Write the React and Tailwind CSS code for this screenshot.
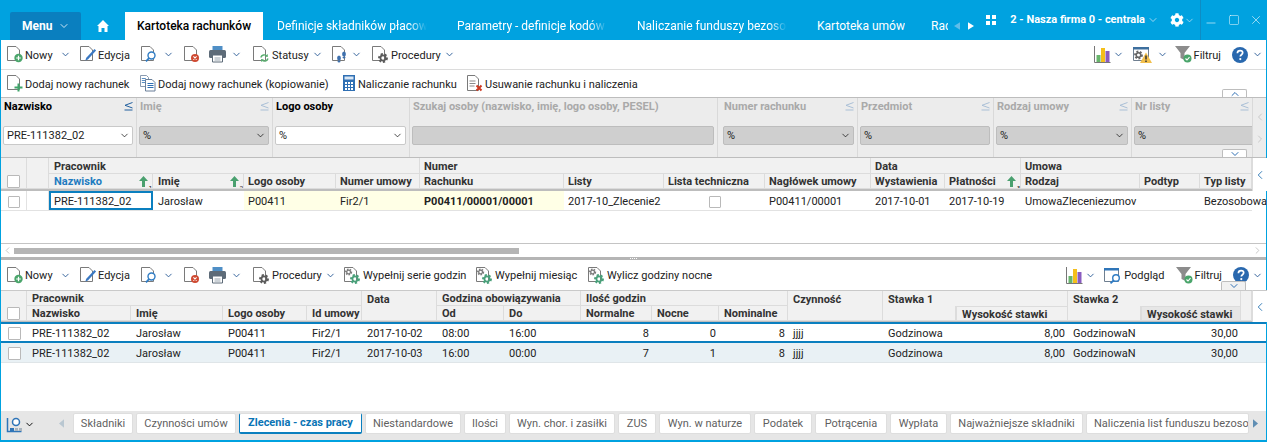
import React from 'react';
import { ChevronDown, ChevronLeft, ChevronRight, ChevronUp, Minus, Square, X } from 'lucide-react';
import { FaCog } from 'react-icons/fa';

// small down chevron used next to toolbar buttons
const Chev = ({ className = '' }) => (
  <ChevronDown className={`w-[11px] h-[11px] text-[#2a5a96] shrink-0 ${className}`} strokeWidth={2} />
);

const Ico = ({ children }) => (
  <svg viewBox="0 0 17 17" className="w-[17px] h-[17px] shrink-0 overflow-visible">{children}</svg>
);

const Page = () => (
  <path d="M.5.5h8.5l3.500 3.500v10.500H.5z" fill="#fff" stroke="#7a7a7a" strokeWidth="1" />
);

const NewIcon = () => (
  <Ico>
    <Page />
    <circle cx="11.500" cy="12" r="4.200" fill="#4aa56b" />
    <path d="M11.500 9.700v4.600M9.200 12h4.600" stroke="#fff" strokeWidth="1.200" />
  </Ico>
);
const EditIcon = () => (
  <Ico>
    <Page />
    <path d="M14.500 3l1.600 1.600-8.200 8.800-2.600 1.200 1-2.800z" fill="#3a78c2" />
  </Ico>
);
const SearchIcon = () => (
  <Ico>
    <Page />
    <circle cx="10.500" cy="9.500" r="3.500" fill="#fff" stroke="#2f7cc4" strokeWidth="1.400" />
    <path d="M8 12.200l-3 3.200" stroke="#2f7cc4" strokeWidth="1.800" />
  </Ico>
);
const DeleteIcon = () => (
  <Ico>
    <Page />
    <circle cx="11" cy="12" r="4" fill="#cf4a32" />
    <path d="M9.400 10.400l3.200 3.200M12.600 10.400l-3.200 3.200" stroke="#fff" strokeWidth="1.100" />
  </Ico>
);
const PrintIcon = () => (
  <Ico>
    <path d="M3.500 0h10v4h-10z" fill="#4f8fc6" />
    <rect x="0" y="4" width="17" height="8" rx="1.500" fill="#5d6b78" />
    <path d="M3.500 9h10v7h-10z" fill="#fff" stroke="#5d6b78" />
    <path d="M5.500 12h6M5.500 14h6" stroke="#9aa6b0" />
  </Ico>
);
const StatusIcon = () => (
  <Ico>
    <Page />
    <path d="M7.800 11.500a3.600 3.600 0 016-1.600M15 12.500a3.600 3.600 0 01-6 1.600" fill="none" stroke="#58ad6e" strokeWidth="1.400" />
    <path d="M14.800 8l0 3-3-.4zM8 16l0-3 3 .4z" fill="#58ad6e" />
  </Ico>
);
const StepsIcon = () => (
  <Ico>
    <Page />
    <ellipse cx="7" cy="12" rx="1.900" ry="2.600" fill="#3e70ad" />
    <ellipse cx="7" cy="15.400" rx="1.500" ry="1" fill="#3e70ad" />
    <ellipse cx="12" cy="8" rx="1.900" ry="2.600" fill="#3e70ad" />
    <ellipse cx="12" cy="11.400" rx="1.500" ry="1" fill="#3e70ad" />
  </Ico>
);
const Cog = ({ x, y, r, color }) => (
  <g>
    <circle cx={x} cy={y} r={r} fill="none" stroke={color} strokeWidth={r * 0.75} strokeDasharray={`${r * 0.55} ${r * 0.45}`} />
    <circle cx={x} cy={y} r={r * 0.72} fill="none" stroke={color} strokeWidth={r * 0.5} />
  </g>
);
const ProcIcon = () => (
  <Ico>
    <Page />
    <Cog x={11} y={12} r={3.600} color="#5c5c5c" />
  </Ico>
);
const FillIcon = () => (
  <Ico>
    <Page />
    <Cog x={4.600} y={5} r={2.600} color="#7c7c7c" />
    <Cog x={11} y={12} r={3.600} color="#4aa07a" />
  </Ico>
);
const AddIcon = () => (
  <Ico>
    <Page />
    <path d="M11.500 8.500v8M7.500 12.500h8" stroke="#3fa46a" strokeWidth="2" />
  </Ico>
);
const CopyIcon = () => (
  <Ico>
    <path d="M.5.5h6l2 2v9h-8z" fill="#fff" stroke="#8a9bb0" />
    <path d="M1.800 3.500h4M1.800 5.500h4M1.800 7.500h4" stroke="#5b8fc4" />
    <path d="M5.500 4.500h6.500l3 3v8.500h-9.500z" fill="#fff" stroke="#6a7f99" />
    <path d="M7.500 8.500h6M7.500 10.500h6M7.500 12.500h6" stroke="#2f6fb3" />
  </Ico>
);
const CalcIcon = () => (
  <Ico>
    <rect x="2" y="0" width="12" height="16" fill="#2f6fb3" />
    <rect x="3.500" y="1.500" width="9" height="3" fill="#d9e7f5" />
    <path d="M4 7h2v2H4zM7 7h2v2H7zM10 7h2v2h-2zM4 10h2v2H4zM7 10h2v2H7zM10 10h2v2h-2zM4 13h2v2H4zM7 13h2v2H7zM10 13h2v2h-2z" fill="#fff" />
  </Ico>
);
const RemoveIcon = () => (
  <Ico>
    <path d="M.5.5h7.500l3.500 3.500v11.500H.5z" fill="#fff" stroke="#7a7a7a" />
    <path d="M2.500 6h6M2.500 8.500h6M2.500 11h5" stroke="#8a8a8a" />
    <path d="M9.500 10.500l5 5M14.500 10.500l-5 5" stroke="#cc3a22" strokeWidth="2" />
  </Ico>
);
const ChartIcon = () => (
  <Ico>
    <path d="M.5 0v16.500h16" fill="none" stroke="#777" />
    <path d="M2.500 9h4v7h-4z" fill="#68b56c" />
    <path d="M7 2h4v14H7z" fill="#f5bf1b" />
    <path d="M11.500 5h4v11h-4z" fill="#8a5cc0" />
  </Ico>
);
const WarnIcon = () => (
  <Ico>
    <path d="M.5 1.500h15v13H.5z" fill="#fff" stroke="#6f7f90" />
    <path d="M0 1h16v2.500H0z" fill="#3d6f9e" />
    <Cog x={5.500} y={9} r={3.200} color="#666" />
    <path d="M13 6.500l6 10.500H7z" fill="#f2bf4b" />
    <path d="M13 9.500v4M13 14.500v1.500" stroke="#333" strokeWidth="1.500" />
  </Ico>
);
const FilterIcon = () => (
  <Ico>
    <path d="M0 0h15l-5.500 7v7l-4-2V7z" fill="#8c8c8c" />
    <circle cx="12.500" cy="12.500" r="4" fill="#4aa56b" />
    <path d="M10.500 12.500l1.500 1.500 2.500-2.800" fill="none" stroke="#fff" strokeWidth="1.100" />
  </Ico>
);
const HelpIcon = () => (
  <svg viewBox="0 0 16 16" className="w-4 h-4 shrink-0">
    <circle cx="8" cy="8" r="8" fill="#2968ae" />
    <path d="M5.400 6.200c0-1.700 1.200-2.600 2.700-2.600s2.600.9 2.600 2.200c0 1.900-2.400 1.900-2.400 3.700" fill="none" stroke="#fff" strokeWidth="1.700" />
    <circle cx="8.300" cy="12.100" r="1.100" fill="#fff" />
  </svg>
);
const PreviewIcon = () => (
  <Ico>
    <path d="M.5 1.500h14v13H.5z" fill="#fff" stroke="#6f7f90" />
    <path d="M0 1h15v2.500H0z" fill="#2f75b8" />
    <circle cx="12" cy="11" r="3.300" fill="#fff" stroke="#2f7cc4" strokeWidth="1.400" />
    <path d="M9.500 13.500l-3 2.800" stroke="#2f7cc4" strokeWidth="1.800" />
  </Ico>
);
const SortIcon = ({ n }) => (
  <span className="relative flex w-[13px] h-[13px] shrink-0">
    <svg viewBox="0 0 9 11" className="w-[9px] h-[11px]">
      <path d="M4.500 0L9 5H6v6H3V5H0z" fill="#4aa06f" />
    </svg>
    <span className="absolute right-0 -bottom-[2px] text-[6px] leading-[7px] text-black font-normal">{n}</span>
  </span>
);
// the little "less or equal" marker in a filter column
const CmpIcon = ({ on }) => (
  <svg viewBox="0 0 9 9" className="w-[9px] h-[9px] mt-[2px] shrink-0">
    <path d="M8.500 .5L1 3.300 8.500 6M.5 8h8" fill="none" stroke={on ? '#215f9e' : '#a9bfd6'} strokeWidth="1" />
  </svg>
);

const Check = ({ className = '' }) => (
  <span className={`block w-[12px] h-[12px] border border-[#b9b9b9] bg-white rounded-[1px] ${className}`} />
);

const Btn = ({ icon, label, chev, w = '', gap = 'ml-[1px]', chevGap = 'ml-[5px]' }) => (
  <div className={`flex items-center shrink-0 ${w}`}>
    {icon}
    {label && <span className={`${gap} relative top-[1px] whitespace-nowrap`}>{label}</span>}
    {chev && <Chev className={chevGap} />}
  </div>
);

const NavTab = ({ w, label, fade }) => (
  <div className={`shrink-0 ${w} h-full flex items-center`}>
    <span className={`block overflow-hidden whitespace-nowrap text-white ${fade ? 'w-[150px] [mask-image:linear-gradient(to_right,black_88%,transparent)]' : ''}`}>
      {label}
    </span>
  </div>
);

const TopBar = () => (
  <div className="h-[40px] shrink-0 flex items-end pl-[10px] text-[12px]">
    <div className="w-[71px] h-[28px] bg-[#0a7fbf] rounded-t-[2px] flex items-center pl-[12px] text-white font-bold">
      Menu
      <ChevronDown className="w-[12px] h-[12px] ml-[6px] text-[#cfe6f5]" strokeWidth={2} />
    </div>
    <div className="w-[44px] h-[28px] flex items-center justify-center">
      <svg viewBox="0 0 12 12" className="w-[12px] h-[12px]">
        <path d="M6 0l6 6h-1.500v6H7.500V8h-3v4H1.500V6H0z" fill="#fff" />
      </svg>
    </div>
    <div className="w-[138px] h-[28px] bg-white flex items-center justify-center font-medium text-black">
      Kartoteka rachunków
    </div>
    <div className="flex h-[28px] ml-[14px] w-[668px]">
      <NavTab w="w-[180px]" label="Definicje składników płacowych" fade />
      <NavTab w="w-[180px]" label="Parametry - definicje kodów płacowych" fade />
      <NavTab w="w-[180px]" label="Naliczanie funduszy bezosobowych" fade />
      <NavTab w="w-[114px]" label="Kartoteka umów" />
      <span className="w-[17px] h-full flex items-center overflow-hidden text-white whitespace-nowrap shrink-0">Rachunki</span>
    </div>
  </div>
);

const TopRight = () => (
  <div className="absolute top-0 right-0 h-[40px] flex items-center text-white">
    <svg viewBox="0 0 8 10" className="w-[6px] h-[10px] mr-[8px] mt-[12px]"><path d="M8 0v10L0 5z" fill="#5fbde9" /></svg>
    <svg viewBox="0 0 8 10" className="w-[6px] h-[10px] mr-[12px] mt-[12px]"><path d="M0 0v10l8-5z" fill="#fff" /></svg>
    <div className="grid grid-cols-2 gap-[2px] mr-[14px] -mt-[1px]">
      <span className="w-[4px] h-[4px] bg-white" />
      <span className="w-[4px] h-[4px] bg-white" />
      <span className="w-[4px] h-[4px] bg-white" />
      <span className="w-[4px] h-[4px] bg-white" />
    </div>
    <span className="font-bold text-[11px] whitespace-nowrap -mt-[1px]">2 - Nasza firma 0 - centrala</span>
    <ChevronDown className="w-[12px] h-[12px] ml-[2px] mr-[11px] text-[#cfe6f5]" strokeWidth={1.500} />
    <FaCog className="w-[14px] h-[14px] text-white" />
    <ChevronDown className="w-[11px] h-[11px] mr-[5px] text-[#cfe6f5]" strokeWidth={1.500} />
    <div className="w-[1px] h-[40px] bg-[#0e8cc4]" />
    <Minus className="w-[14px] h-[14px] ml-[3px] mt-[6px]" strokeWidth={1} />
    <Square className="w-[12px] h-[12px] ml-[10px] -mt-[1px]" strokeWidth={1} />
    <X className="w-[14px] h-[14px] ml-[9px] mr-[4px] -mt-[1px]" strokeWidth={1} />
  </div>
);

const TopToolbar = () => (
  <div className="h-[30px] shrink-0 flex items-center pl-[6px] border-b border-[#dcdcdc] relative">
    <Btn icon={<NewIcon />} label="Nowy" chev w="w-[73px]" chevGap="ml-[7px]" />
    <Btn icon={<EditIcon />} label="Edycja" w="w-[61px]" />
    <Btn icon={<SearchIcon />} chev w="w-[43px]" />
    <Btn icon={<DeleteIcon />} w="w-[25px]" />
    <Btn icon={<PrintIcon />} chev w="w-[44px]" />
    <Btn icon={<StatusIcon />} label="Statusy" gap="ml-[2px]" chev w="w-[79px]" chevGap="ml-[3px]" />
    <Btn icon={<StepsIcon />} chev w="w-[40px]" chevGap="ml-[2px]" />
    <Btn icon={<ProcIcon />} label="Procedury" gap="ml-[2px]" chev w="w-[86px]" chevGap="ml-[3px]" />
    <div className="ml-auto flex items-center pr-[3px]">
      <ChartIcon />
      <Chev className="ml-[2px] mr-[9px]" />
      <WarnIcon />
      <Chev className="ml-[7px] mr-[7px]" />
      <FilterIcon />
      <span className="ml-[2px] mr-[11px] relative top-[1px]">Filtruj</span>
      <HelpIcon />
      <Chev className="ml-[4px]" />
    </div>
  </div>
);

const ActionBar = () => (
  <div className="h-[27px] shrink-0 flex items-center pl-[6px] relative">
    <Btn icon={<AddIcon />} label="Dodaj nowy rachunek" w="w-[133px]" />
    <Btn icon={<CopyIcon />} label="Dodaj nowy rachunek (kopiowanie)" w="w-[201px]" />
    <Btn icon={<CalcIcon />} label="Naliczanie rachunku" gap="ml-0" w="w-[126px]" />
    <Btn icon={<RemoveIcon />} label="Usuwanie rachunku i naliczenia" w="w-[180px]" />
    <div className="absolute right-[19px] bottom-0 w-[25px] h-[8px] border border-b-0 border-[#bdbdbd] rounded-t-[2px] bg-white flex items-center justify-center">
      <ChevronUp className="w-[12px] h-[12px] text-[#2f6fb3]" strokeWidth={2} />
    </div>
  </div>
);

const filters = [
  { w: 'w-[136px]', label: 'Nazwisko', value: 'PRE-111382_02', on: true, sel: true, cmp: true },
  { w: 'w-[136px]', label: 'Imię', value: '%', sel: true, cmp: true },
  { w: 'w-[137px]', label: 'Logo osoby', value: '%', on: true, sel: true },
  { w: 'w-[308px]', label: 'Szukaj osoby (nazwisko, imię, logo osoby, PESEL)', value: '' },
  { w: 'w-[140px]', label: 'Numer rachunku', value: '%', sel: true, cmp: true, pad: true },
  { w: 'w-[136px]', label: 'Przedmiot', value: '%', cmp: true },
  { w: 'w-[138px]', label: 'Rodzaj umowy', value: '%', sel: true, cmp: true },
  { w: 'w-[121px]', label: 'Nr listy', value: '%', sel: true, cmp: true, clip: true },
];

const FilterPanel = () => (
  <div className="h-[61px] shrink-0 flex bg-[#ececec] border-y border-[#bdbdbd] relative">
    {filters.map((f) => (
      <div key={f.label} className={`${f.w} shrink-0 border-r border-[#d9d9d9] flex flex-col overflow-hidden ${f.pad ? 'pl-[5px] pr-[3px]' : 'pl-[2px] pr-[3px]'}`}>
        <div className={`h-[28px] pt-[2px] flex items-start justify-between font-bold leading-[14px] whitespace-nowrap ${f.on ? 'text-black' : 'text-[#a9a9a9]'}`}>
          <span className="ml-[1px]">{f.label}</span>
          {f.cmp && <CmpIcon on={f.on} />}
        </div>
        <div className={`h-[19px] rounded-[2px] border flex items-center pl-[3px] pr-[2px] ${f.clip ? 'w-[130px]' : ''} ${f.on ? 'bg-white border-[#c9c9c9]' : 'bg-[#cfcfcf] border-[#bdbdbd]'}`}>
          <span className="flex-1">{f.value}</span>
          {f.sel && <ChevronDown className="w-[11px] h-[11px] text-black" strokeWidth={1.500} />}
        </div>
      </div>
    ))}
    <div className="flex-1 flex flex-col items-center justify-center gap-[10px] text-[#c9c9c9]">
      <ChevronLeft className="w-[12px] h-[12px]" />
      <ChevronRight className="w-[12px] h-[12px]" />
    </div>
    <div className="absolute right-[19px] bottom-0 w-[25px] h-[8px] border border-b-0 border-[#bdbdbd] rounded-t-[2px] bg-white flex items-center justify-center">
      <ChevronDown className="w-[12px] h-[12px] text-[#2f6fb3]" strokeWidth={2} />
    </div>
  </div>
);

// header and body cells: the inner div sits the text one pixel lower, as in the grid of the app
const HCell = ({ className = '', children }) => (
  <div className={`flex items-center border-r border-b border-[#dcdcdc] font-bold text-[#333] whitespace-nowrap overflow-hidden ${className}`}>
    <div className="relative top-[1px] flex items-center w-full min-w-0 [justify-content:inherit]">{children}</div>
  </div>
);

const TCell = ({ className = '', children }) => (
  <div className={`flex items-center whitespace-nowrap overflow-hidden ${className}`}>
    <div className="relative top-[1px] flex items-center w-full min-w-0 [justify-content:inherit]">{children}</div>
  </div>
);

const upperCols = 'grid-cols-[26px_22px_104px_91px_92px_84px_144px_100px_101px_106px_74px_76px_119px_60px_52px]';

const UpperGrid = () => (
  <div className="flex-1 min-h-0 flex flex-col">
    <div className="flex shrink-0">
      <div className={`grid ${upperCols} grid-rows-[16px_15px] w-[1251px] bg-[#f1f1f1] border-b-[2px] border-[#bdbdbd]`}>
        <HCell className="col-[1/2] row-[1/3] justify-center pt-[14px]"><Check className="w-[13px] h-[13px]" /></HCell>
        <HCell className="col-[2/3] row-[1/3]" />
        <HCell className="col-[3/7] pl-[5px]">Pracownik</HCell>
        <HCell className="col-[7/11] pl-[4px]">Numer</HCell>
        <HCell className="col-[11/13] pl-[4px]">Data</HCell>
        <HCell className="col-[13/16] pl-[4px]">Umowa</HCell>
        <HCell className="col-[3/4] pl-[5px] text-[#1f7cc0]! justify-between">Nazwisko<SortIcon n="1" /></HCell>
        <HCell className="col-[4/5] pl-[5px] justify-between">Imię<SortIcon n="2" /></HCell>
        <HCell className="pl-[4px]">Logo osoby</HCell>
        <HCell className="pl-[4px]">Numer umowy</HCell>
        <HCell className="pl-[4px]">Rachunku</HCell>
        <HCell className="pl-[4px]">Listy</HCell>
        <HCell className="pl-[4px]">Lista techniczna</HCell>
        <HCell className="pl-[4px]">Nagłówek umowy</HCell>
        <HCell className="pl-[4px]">Wystawienia</HCell>
        <HCell className="pl-[4px] justify-between">Płatności<SortIcon n="3" /></HCell>
        <HCell className="pl-[4px]">Rodzaj</HCell>
        <HCell className="pl-[4px]">Podtyp</HCell>
        <HCell className="pl-[4px]">Typ listy</HCell>
      </div>
      <div className="flex-1 bg-white flex items-center justify-center border-l border-[#dcdcdc]">
        <ChevronLeft className="w-[14px] h-[14px] text-[#1f6fb0]" strokeWidth={1.500} />
      </div>
    </div>
    <div className={`grid ${upperCols} w-[1251px] h-[20px] shrink-0 border-b border-[#e2e2e2]`}>
      <TCell className="justify-center border-r border-[#e2e2e2]"><Check /></TCell>
      <TCell className="border-r border-[#e2e2e2]" />
      <TCell className="border-[2px] border-[#0a7fbf] pl-[3px]">PRE-111382_02</TCell>
      <TCell className="pl-[5px]">Jarosław</TCell>
      <TCell className="bg-[#ffffe6] pl-[4px]">P00411</TCell>
      <TCell className="bg-[#ffffe6] pl-[4px]">Fir2/1</TCell>
      <TCell className="bg-[#ffffe6] pl-[4px] font-bold">P00411/00001/00001</TCell>
      <TCell className="pl-[4px]">2017-10_Zlecenie2</TCell>
      <TCell className="justify-center"><Check /></TCell>
      <TCell className="pl-[4px]">P00411/00001</TCell>
      <TCell className="pl-[4px]">2017-10-01</TCell>
      <TCell className="pl-[4px]">2017-10-19</TCell>
      <TCell className="pl-[4px]">UmowaZleceniezumov</TCell>
      <TCell />
      <TCell className="pl-[4px] overflow-visible">Bezosobowa</TCell>
    </div>
    <div className="flex-1" />
    <div className="h-[14px] shrink-0 border-t border-[#c4c4c4] flex items-center">
      <ChevronLeft className="w-[11px] h-[11px] text-[#c4c4c4] ml-[1px]" />
      <div className="w-[505px] h-[6px] bg-[#b5b5b5] ml-[1px]" />
      <ChevronRight className="w-[11px] h-[11px] text-[#c4c4c4] ml-auto mr-[3px]" />
    </div>
  </div>
);

const Splitter = () => (
  <div className="h-[3px] shrink-0 bg-[#b5b5b5] flex items-center justify-center gap-[1px]">
    <span className="w-[1px] h-[1px] bg-white" />
    <span className="w-[1px] h-[1px] bg-white" />
    <span className="w-[1px] h-[1px] bg-white" />
    <span className="w-[1px] h-[1px] bg-white" />
  </div>
);

const LowerToolbar = () => (
  <div className="h-[30px] shrink-0 flex items-center pl-[6px] relative">
    <Btn icon={<NewIcon />} label="Nowy" chev w="w-[73px]" chevGap="ml-[7px]" />
    <Btn icon={<EditIcon />} label="Edycja" w="w-[61px]" />
    <Btn icon={<SearchIcon />} chev w="w-[43px]" />
    <Btn icon={<DeleteIcon />} w="w-[25px]" />
    <Btn icon={<PrintIcon />} chev w="w-[44px]" />
    <Btn icon={<ProcIcon />} label="Procedury" gap="ml-[2px]" chev w="w-[91px]" chevGap="ml-[3px]" />
    <Btn icon={<FillIcon />} label="Wypełnij serie godzin" gap="ml-[2px]" w="w-[132px]" />
    <Btn icon={<FillIcon />} label="Wypełnij miesiąc" gap="ml-[2px]" w="w-[112px]" />
    <Btn icon={<FillIcon />} label="Wylicz godziny nocne" gap="ml-[2px]" />
    <div className="ml-auto flex items-center pr-[3px]">
      <ChartIcon />
      <Chev className="ml-[2px] mr-[8px]" />
      <PreviewIcon />
      <span className="ml-[3px] mr-[11px] relative top-[1px]">Podgląd</span>
      <FilterIcon />
      <span className="ml-[2px] mr-[11px] relative top-[1px]">Filtruj</span>
      <HelpIcon />
      <Chev className="ml-[3px]" />
    </div>
    <div className="absolute right-[20px] bottom-0 w-[25px] h-[9px] border border-b-0 border-[#bdbdbd] rounded-t-[2px] bg-[#f1f1f1] flex items-center justify-center">
      <ChevronDown className="w-[12px] h-[12px] text-[#2f6fb3]" strokeWidth={2} />
    </div>
  </div>
);

const lowerCols = 'grid-cols-[26px_104px_92px_84px_55px_75px_67px_77px_71px_67px_69px_95px_73px_112px_73px_100px_11px]';

const rows = [
  { date: '2017-10-02', od: '08:00', doo: '16:00', nor: '8', noc: '0', cls: 'h-[19px] bg-white' },
  { date: '2017-10-03', od: '16:00', doo: '00:00', nor: '7', noc: '1', cls: 'h-[21px] bg-[#e9f1f5]' },
];

const LowerGrid = () => (
  <div className="flex-1 min-h-0 flex flex-col">
    <div className="flex shrink-0">
      <div className={`grid ${lowerCols} grid-rows-[15px_15px] w-[1251px] bg-[#f1f1f1] border-y border-t-[#c9c9c9] border-b-[#bdbdbd]`}>
        <HCell className="col-[1/2] row-[1/3] justify-center pt-[14px]"><Check className="w-[13px] h-[13px]" /></HCell>
        <HCell className="col-[2/6] pl-[5px]">Pracownik</HCell>
        <HCell className="col-[6/7] row-[1/3] pl-[5px] items-start pt-[1px]">Data</HCell>
        <HCell className="col-[7/9] pl-[5px]">Godzina obowiązywania</HCell>
        <HCell className="col-[9/12] pl-[5px]">Ilość godzin</HCell>
        <HCell className="col-[12/13] row-[1/3] pl-[5px] items-start pt-[1px]">Czynność</HCell>
        <HCell className="col-[13/15] pl-[5px] border-b-0">Stawka 1</HCell>
        <HCell className="col-[15/17] pl-[5px] border-b-0">Stawka 2</HCell>
        <HCell className="col-[17/18] row-[1/3]" />
        <HCell className="col-[2/3] row-[2/3] pl-[5px]">Nazwisko</HCell>
        <HCell className="col-[3/4] row-[2/3] pl-[5px]">Imię</HCell>
        <HCell className="col-[4/5] row-[2/3] pl-[5px]">Logo osoby</HCell>
        <HCell className="col-[5/6] row-[2/3] pl-[5px]">Id umowy</HCell>
        <HCell className="col-[7/8] row-[2/3] pl-[5px]">Od</HCell>
        <HCell className="col-[8/9] row-[2/3] pl-[5px]">Do</HCell>
        <HCell className="col-[9/10] row-[2/3] pl-[5px]">Normalne</HCell>
        <HCell className="col-[10/11] row-[2/3] pl-[5px]">Nocne</HCell>
        <HCell className="col-[11/12] row-[2/3] pl-[5px]">Nominalne</HCell>
        <HCell className="col-[13/14] row-[2/3]" />
        <HCell className="col-[14/15] row-[2/3] pl-[5px] border-t border-l">Wysokość stawki</HCell>
        <HCell className="col-[15/16] row-[2/3]" />
        <HCell className="col-[16/17] row-[2/3] pl-[5px] bg-[#e6e6e6] border-t border-l">Wysokość stawki</HCell>
      </div>
      <div className="flex-1 bg-white flex items-center justify-center border-l border-t border-[#dcdcdc] border-t-[#c9c9c9]">
        <ChevronLeft className="w-[14px] h-[14px] text-[#1f6fb0]" strokeWidth={1.500} />
      </div>
    </div>
    {rows.map((r) => (
      <div key={r.date} className={`grid ${lowerCols} w-full shrink-0 border-t-[2px] border-[#0a7fbf] ${r.cls}`}>
        <TCell className="justify-center"><Check className="w-[13px] h-[13px]" /></TCell>
        <TCell className="pl-[5px]">PRE-111382_02</TCell>
        <TCell className="pl-[5px]">Jarosław</TCell>
        <TCell className="pl-[5px]">P00411</TCell>
        <TCell className="pl-[5px]">Fir2/1</TCell>
        <TCell className="pl-[5px]">{r.date}</TCell>
        <TCell className="pl-[5px]">{r.od}</TCell>
        <TCell className="pl-[5px]">{r.doo}</TCell>
        <TCell className="justify-end pr-[3px]">{r.nor}</TCell>
        <TCell className="justify-end pr-[3px]">{r.noc}</TCell>
        <TCell className="justify-end pr-[3px]">8</TCell>
        <TCell className="pl-[5px]">jjjj</TCell>
        <TCell className="pl-[5px]">Godzinowa</TCell>
        <TCell className="justify-end pr-[3px]">8,00</TCell>
        <TCell className="pl-[5px]">GodzinowaN</TCell>
        <TCell className="justify-end pr-[3px]">30,00</TCell>
        <TCell />
      </div>
    ))}
    <div className="border-t border-[#dfe5e8]" />
  </div>
);

const bottomTabs = [
  { w: 'w-[60px]', label: 'Składniki' },
  { w: 'w-[100px]', label: 'Czynności umów' },
  { w: 'w-[123px]', label: 'Zlecenia - czas pracy', on: true },
  { w: 'w-[96px]', label: 'Niestandardowe' },
  { w: 'w-[42px]', label: 'Ilości' },
  { w: 'w-[106px]', label: 'Wyn. chor. i zasiłki' },
  { w: 'w-[38px]', label: 'ZUS' },
  { w: 'w-[92px]', label: 'Wyn. w naturze' },
  { w: 'w-[58px]', label: 'Podatek' },
  { w: 'w-[72px]', label: 'Potrącenia' },
  { w: 'w-[57px]', label: 'Wypłata' },
  { w: 'w-[133px]', label: 'Najważniejsze składniki' },
  { w: 'w-[163px]', label: 'Naliczenia list funduszu bezosobowego', clip: true },
];

const BottomTabs = () => (
  <div className="h-[29px] shrink-0 bg-[#e6e6e6] flex pt-[2px] pl-[6px]">
    <div className="w-[31px] h-[20px] flex items-center shrink-0">
      <svg viewBox="0 0 15 15" className="w-[15px] h-[15px] mt-[3px] overflow-visible">
        <path d="M.5 1v13.500h14" fill="none" stroke="#2f75b8" strokeWidth="1.500" />
        <circle cx="9" cy="5" r="3.500" fill="#fff" stroke="#2f75b8" strokeWidth="1.500" />
        <path d="M3 11h4v3H3z" fill="#2f75b8" />
        <path d="M8 11h3v3H8zM12 11h3v3h-3z" fill="#a9b4bd" />
      </svg>
      <ChevronDown className="w-[11px] h-[11px] text-black ml-[2px] mt-[2px] shrink-0" strokeWidth={2} />
    </div>
    <svg viewBox="0 0 6 10" className="w-[5px] h-[9px] ml-[21px] mr-[9px] mt-[6px] shrink-0"><path d="M6 0v10L0 5z" fill="#b9c7d1" /></svg>
    <div className="flex gap-[3px]">
      {bottomTabs.map((t) => (
        <div key={t.label} className={`${t.w} h-[21px] shrink-0 bg-white rounded-[2px] border border-[#dedede] overflow-hidden whitespace-nowrap flex items-center ${t.clip ? 'pl-[7px]' : 'justify-center'} ${t.on ? 'text-[#0a74b5] font-bold border-b-[2px] border-x-[#0a7fbf] border-b-[#0a7fbf]' : 'text-[#5f5f5f]'}`}>
          {t.label}
        </div>
      ))}
    </div>
    <svg viewBox="0 0 6 10" className="w-[5px] h-[9px] ml-[4px] mt-[6px] shrink-0"><path d="M0 0v10l6-5z" fill="#5f8eb3" /></svg>
  </div>
);

const App = () => {
  return (
    <div className="w-[1267px] h-[442px] bg-[#00a2e0] flex flex-col overflow-hidden relative text-[11px] leading-[14px] text-[#222] [font-family:Roboto,sans-serif]">
      <TopBar />
      <TopRight />
      <div className="flex-1 min-h-0 mx-[1px] mb-[2px] bg-white flex flex-col">
        <TopToolbar />
        <ActionBar />
        <FilterPanel />
        <div className="h-[99px] shrink-0 flex flex-col">
          <UpperGrid />
        </div>
        <Splitter />
        <LowerToolbar />
        <LowerGrid />
        <BottomTabs />
      </div>
    </div>
  );
};

export default App;
